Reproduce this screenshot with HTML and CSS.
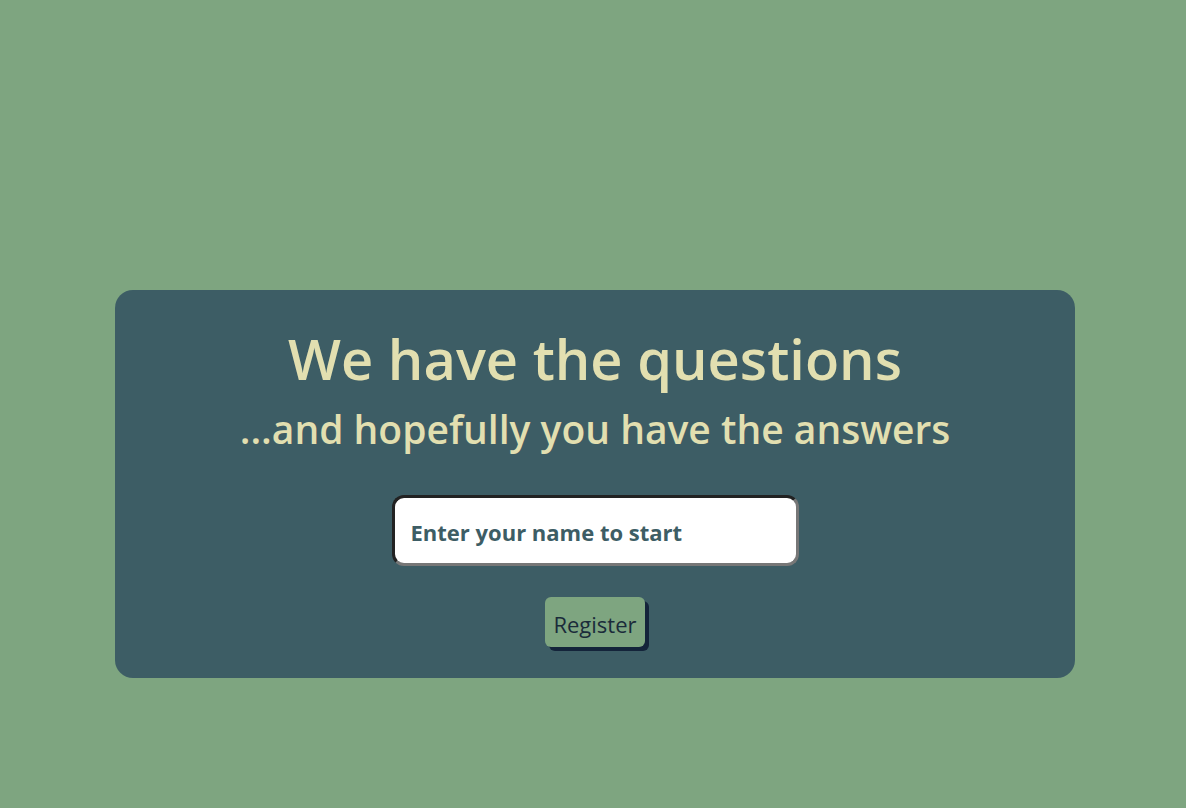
FILE: index.html
```html
<!DOCTYPE html>
<html lang="en">
<head>
<meta charset="utf-8">
<title>Quiz</title>
<link rel="stylesheet" href="styles.css">
</head>
<body>
<main class="page">
  <section class="card">
    <h1 class="title">We have the questions</h1>
    <h2 class="subtitle">...and hopefully you have the answers</h2>
    <form class="form">
      <input class="name-input" type="text" placeholder="Enter your name to start">
      <button class="register" type="button">Register</button>
    </form>
  </section>
</main>
</body>
</html>
```

FILE: styles.css
```css
html, body {
  margin: 0;
  padding: 0;
}
body {
  background: #7ea580;
  font-family: "Open Sans", "Noto Sans", sans-serif;
  min-height: 808px;
}
.page {
  padding-top: 290px;
  display: flex;
  justify-content: center;
}
.card {
  width: 960px;
  height: 388px;
  box-sizing: border-box;
  background: #3d5d65;
  border-radius: 18px;
  display: flex;
  flex-direction: column;
  align-items: center;
  padding-top: 30px;
  margin-left: 4px;
}
.title {
  margin: 0;
  color: #e2dfb0;
  font-size: 56px;
  font-weight: 600;
  line-height: 76px;
}
.subtitle {
  margin: 0;
  margin-top: 7px;
  color: #e2dfb0;
  font-size: 39px;
  font-weight: 600;
  line-height: 52px;
}
.form {
  display: flex;
  flex-direction: column;
  align-items: center;
  margin-top: 40px;
}
.name-input {
  width: 407px;
  height: 71px;
  box-sizing: border-box;
  border: 3px solid #777;
  border-top-color: #222;
  border-left-color: #222;
  border-right-color: #777;
  border-bottom-color: #777;
  border-radius: 12px;
  padding: 2px 16px 0;
  font-family: inherit;
  font-size: 22px;
  font-weight: 700;
  color: #3d5d65;
  background: #fff;
  outline: none;
}
.name-input::placeholder {
  color: #3d5d65;
  opacity: 1;
}
.register {
  margin-top: 31px;
  width: 100px;
  height: 50px;
  border: none;
  border-radius: 6px;
  background: #7ea580;
  color: #1a2b3a;
  font-family: inherit;
  font-size: 22px;
  box-shadow: 4px 4px 0 #14243a;
  padding: 3px 0 0;
}
```
